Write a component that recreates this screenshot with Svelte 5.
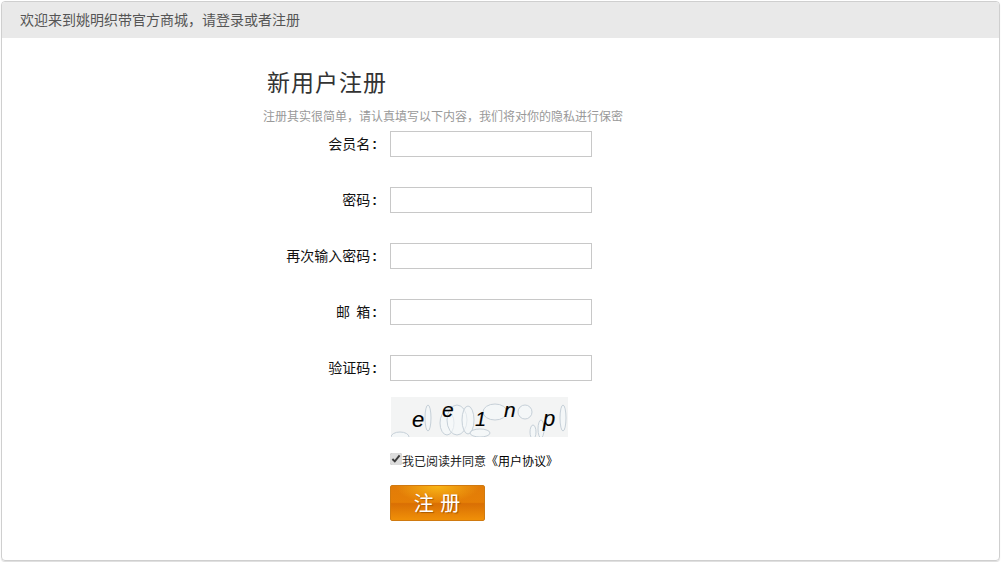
<script>
  const fields = [
    { label: '会员名', type: 'text' },
    { label: '密码', type: 'password' },
    { label: '再次输入密码', type: 'password' },
    { label: '邮\u00a0\u00a0箱', type: 'text' },
    { label: '验证码', type: 'text' }
  ]
  // background noise of the captcha
  const noise = [
    [37, 21, 3, 13], [56, 26, 7, 12], [66, 23, 10, 15], [77, 23, 6, 14], [104, 15, 12, 8],
    [89, 36, 10, 4], [134, 15, 7, 7], [172, 21, 3, 13], [9, 40, 9, 5], [142, 35, 3, 7], [150, 32, 3, 9]
  ]
  const letters = [
    { ch: 'e', x: 21, y: 30, size: 22 },
    { ch: 'e', x: 51, y: 20, size: 21 },
    { ch: '1', x: 84, y: 29, size: 20 },
    { ch: 'n', x: 113, y: 20, size: 21 },
    { ch: 'p', x: 152, y: 29, size: 22 }
  ]
</script>

<div class="panel">
  <div class="head">欢迎来到姚明织带官方商城，请登录或者注册</div>
  <div class="body">
    <h1>新用户注册</h1>
    <p class="tip">注册其实很简单，请认真填写以下内容，我们将对你的隐私进行保密</p>
    <form onsubmit={(e) => e.preventDefault()}>
      {#each fields as f}
        <div class="row">
          <label for={f.label}>{f.label}<span class="colon">:</span></label>
          <input id={f.label} type={f.type} />
        </div>
      {/each}
      <div class="rest">
        <svg class="captcha" width="177" height="40" viewBox="0 0 177 40">
          <rect width="177" height="40" fill="#f3f4f4" />
          {#each noise as n}
            <ellipse cx={n[0]} cy={n[1]} rx={n[2]} ry={n[3]} fill="#f5f8fa" fill-opacity="0.6" stroke="#c6d0d8" stroke-width="1" />
          {/each}
          {#each letters as l}
            <text x={l.x} y={l.y} font-size={l.size} class="ch">{l.ch}</text>
          {/each}
        </svg>
        <label class="agree">
          <input type="checkbox" checked />我已阅读并同意<span class="book">《用户协议》</span>
        </label>
        <button type="submit">注 册</button>
      </div>
    </form>
  </div>
</div>

<style>
  :global(body) {
    background: #fff;
    font-family: "Noto Sans CJK SC", "Liberation Sans", sans-serif;
  }
  .panel {
    margin: 1px;
    height: 560px;
    box-sizing: border-box;
    border: 1px solid #cfcfcf;
    border-radius: 4px;
    overflow: hidden;
    box-shadow: 0 1px 1px #ddd;
  }
  .head {
    height: 36px;
    line-height: 34px;
    padding-left: 18px;
    background: #e9e9e9;
    font-size: 14px;
    color: #555;
  }
  .body {
    padding-left: 261px;
  }
  h1 {
    margin: 0;
    padding: 25px 0 0 4px;
    height: 41px;
    line-height: 36px;
    font-size: 23px;
    font-weight: 400;
    letter-spacing: 1px;
    color: #333;
  }
  .tip {
    margin: 0;
    padding-top: 2px;
    height: 25px;
    line-height: 20px;
    font-size: 12px;
    color: #999;
  }
  .row {
    display: flex;
    align-items: center;
    margin-bottom: 30px;
  }
  .row label {
    width: 114px;
    margin-right: 13px;
    text-align: right;
    font-size: 14px;
    color: #111;
    position: relative;
    top: -1px;
  }
  .colon {
    font-family: "Liberation Sans", sans-serif;
    font-weight: 700;
    padding-left: 2px;
  }
  .row input {
    width: 202px;
    height: 26px;
    box-sizing: border-box;
    border: 1px solid #c8c8c8;
    background: #fff;
    padding: 0 4px;
  }
  .rest {
    margin-left: 127px;
    margin-top: -14px;
    display: flex;
    flex-direction: column;
    align-items: flex-start;
  }
  .captcha {
    display: block;
    margin-left: 1px;
  }
  .ch {
    font-family: "Liberation Sans", sans-serif;
    font-style: italic;
    fill: #000;
    stroke: #000;
    stroke-width: 0.15;
  }
  .agree {
    display: flex;
    align-items: center;
    margin-top: 16px;
    height: 14px;
    font-size: 12px;
    color: #222;
  }
  .agree input {
    width: 12px;
    height: 12px;
    margin: -2px 0 0;
    accent-color: #dcdcdc;
  }
  .book {
    color: #000;
    margin-right: -6px;
  }
  button {
    margin-top: 18px;
    width: 95px;
    height: 36px;
    padding: 0;
    border: 1px solid #d07a10;
    border-radius: 2px;
    background:
      radial-gradient(ellipse 45% 50% at 50% 0, #f9b616, transparent),
      linear-gradient(to bottom, #e27c08 0%, #e57f06 48%, #d96f04 52%, #f09008 100%);
    color: #fff;
    font-family: inherit;
    font-size: 20px;
    line-height: 30px;
    letter-spacing: 1px;
    text-shadow: 1px 1px 1px #a85a00;
  }
</style>
